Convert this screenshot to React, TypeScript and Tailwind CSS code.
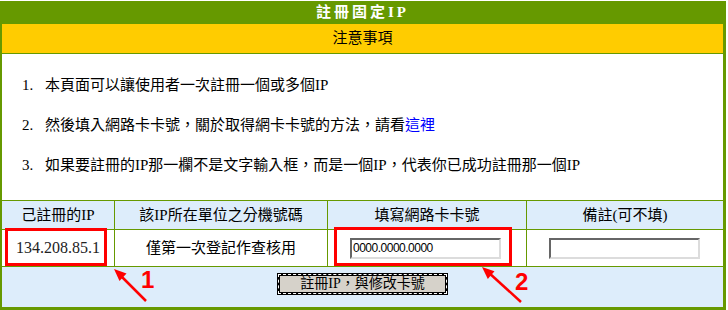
import React from "react";

export default function App() {
  return (
    <div className="relative w-[728px] h-[310px] bg-white overflow-hidden [font-family:'Liberation_Serif','Noto_Sans_CJK_TC',serif] text-black">
      <div className="mt-[1px] w-[726px] border-l-2 border-r-[3px] border-b-[3px] border-[#669900] bg-white">
        <div className="h-[23px] bg-[#669900] text-white text-[15px] font-bold tracking-[3px] leading-[23px] text-center">
          註冊固定IP
        </div>
        <div className="h-[30px] bg-[#ffcc00] border-b border-[#669900] text-[15px] leading-[29px] text-center">
          注意事項
        </div>
        <div className="h-[146px] pt-[21px] flex flex-col gap-[20px] text-[15px] leading-[20px]">
          <div className="flex">
            <span className="w-[43px] pl-[20px]">1.</span>
            <span>本頁面可以讓使用者一次註冊一個或多個IP</span>
          </div>
          <div className="flex">
            <span className="w-[43px] pl-[20px]">2.</span>
            <span>
              然後填入網路卡卡號，關於取得網卡卡號的方法，請看
              <a className="text-[#0000ff]">這裡</a>
            </span>
          </div>
          <div className="flex">
            <span className="w-[43px] pl-[20px]">3.</span>
            <span>如果要註冊的IP那一欄不是文字輸入框，而是一個IP，代表你已成功註冊那一個IP</span>
          </div>
        </div>
        <div className="grid grid-cols-[112px_1px_212px_1px_198px_1px_196px] border-t border-[#669900] text-[15px]">
          <div className="h-[28px] bg-[#ddedfb] flex items-center justify-center">己註冊的IP</div>
          <div className="bg-[#669900]" />
          <div className="h-[28px] bg-[#ddedfb] flex items-center justify-center">該IP所在單位之分機號碼</div>
          <div className="bg-[#669900]" />
          <div className="h-[28px] bg-[#ddedfb] flex items-center justify-center">填寫網路卡卡號</div>
          <div className="bg-[#669900]" />
          <div className="h-[28px] bg-[#ddedfb] flex items-center justify-center">備註(可不填)</div>
        </div>
        <div className="grid grid-cols-[112px_1px_212px_1px_198px_1px_196px] border-t border-[#669900] text-[15px]">
          <div className="h-[36px] flex items-center justify-center text-[16px] text-[#222222] [font-family:'Liberation_Serif',serif]">134.208.85.1</div>
          <div className="bg-[#669900]" />
          <div className="h-[36px] flex items-center justify-center">僅第一次登記作查核用</div>
          <div className="bg-[#669900]" />
          <div className="h-[36px] flex items-center pl-[22px]">
            <div className="w-[151px] h-[21px] border-2 border-t-[#666666] border-l-[#666666] border-b-[#dcdcdc] border-r-[#dcdcdc] bg-white text-[12px] tracking-[-0.5px] leading-[17px] pl-[1px] [font-family:'Liberation_Sans','Noto_Sans_CJK_TC',sans-serif]">
              0000.0000.0000
            </div>
          </div>
          <div className="bg-[#669900]" />
          <div className="h-[36px] flex items-center pl-[22px]">
            <div className="w-[151px] h-[21px] border-2 border-t-[#666666] border-l-[#666666] border-b-[#dcdcdc] border-r-[#dcdcdc] bg-white" />
          </div>
        </div>
        <div className="h-[41px] border-t border-[#669900] bg-[#ddedfb] flex items-start justify-center pt-[6px]">
          <div className="w-[171px] h-[22px] border-[3px] border-black outline outline-1 outline-dashed outline-white -outline-offset-2 bg-[#d6d2ca] text-[14px] leading-[16px] text-center">
            註冊IP，與修改卡號
          </div>
        </div>
      </div>

      <div className="absolute left-[5px] top-[228px] w-[102px] h-[38px] border-[3px] border-[#ff0000]" />
      <div className="absolute left-[334px] top-[227px] w-[178px] h-[39px] border-[3px] border-[#ff0000]" />
      <svg className="absolute left-0 top-0 pointer-events-none" width="728" height="310">
        <line x1="146" y1="301" x2="120" y2="275" stroke="#ff0000" strokeWidth="2.5" />
        <polygon points="114,269 126.5,273.5 119.5,281" fill="#ff0000" />
        <line x1="521" y1="302" x2="488" y2="272" stroke="#ff0000" strokeWidth="2.5" />
        <polygon points="482,267 494.5,271.3 487.8,278.9" fill="#ff0000" />
      </svg>
      <div className="absolute left-[141px] top-[268px] text-[24px] font-bold text-[#ff0000] leading-[24px] [font-family:'Liberation_Sans',sans-serif]">1</div>
      <div className="absolute left-[515px] top-[270px] text-[24px] font-bold text-[#ff0000] leading-[24px] [font-family:'Liberation_Sans',sans-serif]">2</div>
    </div>
  );
}
